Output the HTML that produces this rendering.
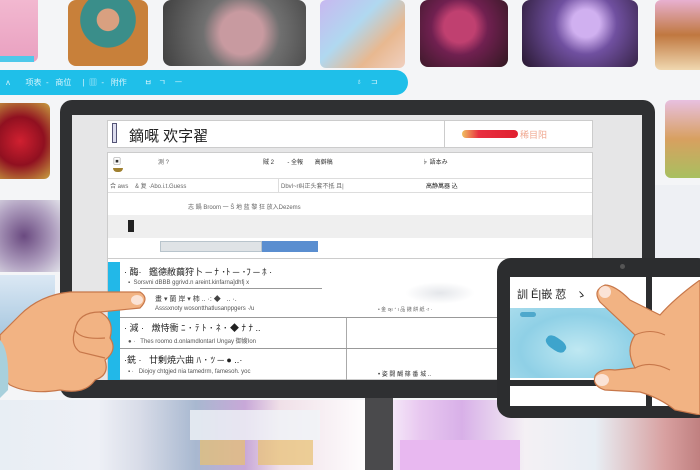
<!DOCTYPE html>
<html><head><meta charset="utf-8"><style>
*{margin:0;padding:0;box-sizing:border-box}
body{width:700px;height:470px;overflow:hidden;background:#f4f5f7;position:relative;font-family:"Liberation Sans","Noto Sans CJK SC",sans-serif}
.a{position:absolute}
.t{position:absolute;font-size:8px;color:#666;white-space:nowrap}
</style></head><body>
<!-- top thumbnails -->
<div class="a" style="left:0;top:0;width:38px;height:62px;background:linear-gradient(#f2b8d0,#e9a0c0);border-radius:0 0 6px 0"></div>
<div class="a" style="left:0;top:56px;width:34px;height:6px;background:#4ec8ea"></div>
<div class="a" style="left:68px;top:0;width:80px;height:66px;border-radius:8px;background:radial-gradient(circle at 50% 30%,#d9a080 0 18%,#3a8e8a 19% 45%,#c8803a 46%)"></div>
<div class="a" style="left:163px;top:0;width:143px;height:66px;border-radius:8px;background:radial-gradient(circle at 55% 50%,#c89aa0 0 25%,#707070 45%,#404040)"></div>
<div class="a" style="left:320px;top:0;width:85px;height:68px;border-radius:6px;background:linear-gradient(135deg,#c8b8f0,#b0d8f0 40%,#e8b890 70%,#f0d0c0)"></div>
<div class="a" style="left:420px;top:0;width:88px;height:67px;border-radius:8px;background:radial-gradient(circle at 45% 40%,#c04070 0 25%,#702050 45%,#301820)"></div>
<div class="a" style="left:522px;top:0;width:116px;height:67px;border-radius:8px;background:radial-gradient(circle at 55% 35%,#d0b0f0 0 18%,#7050a0 40%,#281830)"></div>
<div class="a" style="left:655px;top:0;width:45px;height:70px;border-radius:6px 0 0 6px;background:linear-gradient(#e8b0d0,#c07840,#f0d8b0)"></div>
<!-- cyan bar -->
<div class="a" style="left:0;top:70px;width:408px;height:25px;background:#1fbfe9;border-radius:0 13px 13px 0"></div>
<div class="t" style="left:6px;top:77px;color:#d8f4fc">ᴧ&nbsp;&nbsp;&nbsp;&nbsp;&nbsp;&nbsp;&nbsp;项表&nbsp;&nbsp;-&nbsp;&nbsp;&nbsp;商位&nbsp;&nbsp;&nbsp;&nbsp;&nbsp;|&nbsp;&nbsp;▥&nbsp;&nbsp;-&nbsp;&nbsp;&nbsp;附作&nbsp;&nbsp;&nbsp;&nbsp;&nbsp;&nbsp;&nbsp;&nbsp;ㅂ&nbsp;&nbsp;&nbsp;ㄱ&nbsp;&nbsp;&nbsp;&nbsp;ㅡ</div>
<div class="t" style="left:356px;top:77px;color:#d8f4fc">♁&nbsp;&nbsp;&nbsp;&nbsp;⊐</div>
<!-- side tiles -->
<div class="a" style="left:0;top:103px;width:50px;height:76px;border-radius:0 6px 6px 0;background:radial-gradient(circle at 40% 50%,#d02030,#901020 50%,#c8a040)"></div>
<div class="a" style="left:0;top:200px;width:60px;height:72px;background:radial-gradient(circle at 40% 50%,#6a4a80,#b0a0c0 60%,#e0e0e8)"></div>
<div class="a" style="left:0;top:275px;width:55px;height:60px;background:linear-gradient(#dbe8f4,#a8c8e0)"></div>
<div class="a" style="left:665px;top:100px;width:35px;height:78px;border-radius:6px 0 0 6px;background:linear-gradient(#e8c0e0,#d8a060,#a8c060)"></div>
<div class="a" style="left:655px;top:185px;width:45px;height:75px;background:#eef0f4"></div>
<!-- bottom blur -->
<div class="a" style="left:0;top:400px;width:700px;height:70px;background:linear-gradient(90deg,#e8eef4 0,#eef0f6 14%,#d8dce8 20%,#a8b8d0 28%,#c8a8d8 35%,#f0e0e8 40%,#ffffff 53%,#e8c8f0 60%,#d8b0e8 66%,#f4f0f4 75%,#e8eef4 85%,#d8a0a0 95%,#c08080)"></div>
<div class="a" style="left:190px;top:410px;width:130px;height:30px;background:#f0f4f8;opacity:.8"></div>
<div class="a" style="left:200px;top:440px;width:45px;height:25px;background:#e8c070;opacity:.7"></div>
<div class="a" style="left:258px;top:440px;width:55px;height:25px;background:#e8c070;opacity:.7"></div>
<div class="a" style="left:400px;top:440px;width:120px;height:30px;background:#e8b8f0"></div>
<!-- stand -->
<div class="a" style="left:365px;top:395px;width:28px;height:75px;background:#4a4a4c"></div>
<!-- monitor -->
<div class="a" style="left:60px;top:100px;width:595px;height:298px;background:#2f3032;border-radius:12px"></div>
<div class="a" style="left:72px;top:115px;width:570px;height:265px;background:#e6e6e7"></div>
<!-- header -->
<div class="a" style="left:107px;top:120px;width:486px;height:28px;background:#fff;border:1px solid #ccc"></div>
<div class="a" style="left:112px;top:123px;width:5px;height:20px;border:1px solid #557;background:#dde"></div>
<div class="t" style="left:129px;top:125px;font-size:15px;color:#222">鏑嘅 欢字翟</div>
<div class="a" style="left:444px;top:121px;width:1px;height:26px;background:#ccc"></div>
<div class="a" style="left:462px;top:130px;width:56px;height:8px;border-radius:4px;background:linear-gradient(90deg,#f0c060,#e83040 30%,#e02030)"></div>
<div class="t" style="left:520px;top:128px;color:#f0a890;font-size:9px">稀目阳</div>
<!-- table -->
<div class="a" style="left:107px;top:152px;width:486px;height:228px;background:#fff;border:1px solid #ccc"></div>
<div class="a" style="left:108px;top:178px;width:484px;height:1px;background:#ddd"></div>
<div class="a" style="left:108px;top:192px;width:484px;height:1px;background:#ddd"></div>
<div class="a" style="left:108px;top:215px;width:484px;height:23px;background:#efefef"></div>
<div class="a" style="left:278px;top:178px;width:1px;height:14px;background:#ddd"></div>
<div class="t" style="left:113px;top:156px;color:#333">▣</div>
<div class="a" style="left:113px;top:168px;width:10px;height:4px;background:#a08030;border-radius:0 0 5px 5px"></div>
<div class="t" style="left:158px;top:157px;font-size:6px">測 ?</div>
<div class="t" style="left:263px;top:157px;font-size:6px;color:#333">賊 2&nbsp;&nbsp;&nbsp;&nbsp;&nbsp;&nbsp;&nbsp;&nbsp;- 全報&nbsp;&nbsp;&nbsp;&nbsp;&nbsp;&nbsp;&nbsp;高僻稿</div>
<div class="t" style="left:422px;top:157px;font-size:6px;color:#333">♭ 語本み</div>
<div class="t" style="left:110px;top:181px;font-size:6px">合 aws&nbsp;&nbsp;&nbsp;&nbsp;& 复 ·Abo.i.t.Guess</div>
<div class="t" style="left:281px;top:181px;font-size:6px">Dbvl~r纠正头套不抵 且|</div>
<div class="t" style="left:426px;top:181px;font-size:6px;color:#222">高静萬器 込</div>
<div class="t" style="left:188px;top:202px;font-size:6px">志 鍋 Broom&nbsp;一 Ŝ 地 蓝 黎 狂 放入Dezems</div>
<div class="a" style="left:128px;top:220px;width:6px;height:12px;background:#222"></div>
<div class="a" style="left:160px;top:241px;width:102px;height:11px;background:#dfe3e6;border:1px solid #b8c4cc"></div>
<div class="a" style="left:262px;top:241px;width:56px;height:11px;background:#5a8ed0"></div>
<div class="a" style="left:108px;top:258px;width:484px;height:1px;background:#ccc"></div>
<!-- list -->
<div class="a" style="left:108px;top:262px;width:12px;height:118px;background:#22b8e8"></div>
<div class="t" style="left:124px;top:265px;font-size:9px;color:#222">· 酶·&nbsp;&nbsp;&nbsp;鑑德敝繭狩卜 ─ ﾅ ･ﾄ ─ ･ﾌ ─ ﾎ ·</div>
<div class="t" style="left:128px;top:280px;font-size:6px;color:#555">▪&nbsp;&nbsp;Sorsvni dBBB ggrivd.n areint.kinfarna]dhfj x</div>
<div class="a" style="left:140px;top:288px;width:182px;height:1px;background:#999"></div>
<div class="t" style="left:155px;top:294px;font-size:7px;color:#444">畫 ▾ 蘭 岸 ▾ 柿 .. ·: ◆&nbsp;&nbsp;&nbsp;.. ·.</div>
<div class="t" style="left:155px;top:306px;font-size:6px;color:#555">Asssxnoty wosontthatlusanppgers ·/u</div>
<div class="a" style="left:405px;top:282px;width:70px;height:22px;border-radius:10px;background:radial-gradient(ellipse,#e4e6ea,#fff 70%)"></div>
<div class="t" style="left:378px;top:306px;font-size:5px">• 金 ıʞı ᐩ ı 品 錢 餅 紙 ·r ·</div>
<div class="a" style="left:120px;top:317px;width:472px;height:1px;background:#999"></div>
<div class="a" style="left:346px;top:318px;width:1px;height:62px;background:#aaa"></div>
<div class="t" style="left:124px;top:321px;font-size:9px;color:#222">· 減 ·&nbsp;&nbsp;&nbsp;燉恃衝 ﾆ ･ ﾃ ﾄ ･ ﾈ ･ ◆ ﾅ ﾅ ..</div>
<div class="t" style="left:128px;top:336px;font-size:6px;color:#555">● ·&nbsp;&nbsp;&nbsp;Thes roomo d.onlamdlontarl Ungay 御嫂Ion</div>
<div class="a" style="left:120px;top:348px;width:472px;height:1px;background:#999"></div>
<div class="t" style="left:124px;top:353px;font-size:9px;color:#222">·銑 ·&nbsp;&nbsp;&nbsp;廿剰焼六曲 ﾊ ･ ﾂ ─ ● ..·</div>
<div class="t" style="left:128px;top:369px;font-size:6px;color:#555">▪ ·&nbsp;&nbsp;&nbsp;Diojoy chtgjed nia tamedrm, famesoh. yoc</div>
<div class="t" style="left:378px;top:369px;font-size:6px;color:#333">• 姿 闘 醐 篠 番 城 ..</div>
<!-- left hand -->
<svg class="a" style="left:0;top:280px" width="160" height="125" viewBox="0 0 160 125">
<path d="M0 55 L20 35 Q40 15 70 12 L140 12 Q150 18 140 28 L100 32 Q115 40 110 58 Q118 70 105 80 Q110 95 95 100 Q85 115 60 110 Q30 115 10 105 L0 95 Z" fill="#f2b383" stroke="#c7774a" stroke-width="1.2"/>
<path d="M100 32 Q78 32 75 50 Q80 60 105 58 M75 50 Q70 65 80 72 L105 78" fill="none" stroke="#c7774a" stroke-width="1.2"/>
<ellipse cx="137" cy="20" rx="6" ry="5" fill="#fbe3d6"/>
<path d="M0 60 Q10 70 8 110 L0 118 Z" fill="#a8d0dc"/>
</svg>
<!-- tablet -->
<div class="a" style="left:497px;top:258px;width:215px;height:160px;background:#2c2d2f;border-radius:14px"></div>
<div class="a" style="left:620px;top:264px;width:5px;height:5px;border-radius:50%;background:#555"></div>
<div class="a" style="left:510px;top:277px;width:136px;height:103px;background:#fff"></div>
<div class="a" style="left:652px;top:277px;width:48px;height:103px;background:#fff"></div>
<div class="a" style="left:510px;top:386px;width:136px;height:20px;background:#fff"></div>
<div class="a" style="left:652px;top:386px;width:48px;height:20px;background:#fff"></div>
<div class="a" style="left:510px;top:308px;width:136px;height:70px;background:radial-gradient(ellipse at 50% 60%,#bfe8f2,#8fd0e6 60%,#a8dcec)"></div>
<div class="a" style="left:545px;top:338px;width:22px;height:12px;background:#3ea4cc;border-radius:40%;transform:rotate(35deg)"></div>
<div class="a" style="left:520px;top:312px;width:16px;height:5px;background:#4ea8cc;border-radius:3px"></div>
<div class="t" style="left:517px;top:286px;font-size:11px;color:#222">訓 Ĕ|嵌 荵&nbsp;&nbsp;&nbsp;ゝ</div>
<!-- right hand -->
<svg class="a" style="left:580px;top:280px" width="120" height="135" viewBox="0 0 120 135">
<path d="M120 0 L120 135 L95 130 Q80 118 60 112 L25 110 Q12 106 15 96 Q20 88 35 90 L55 88 Q45 70 55 55 L20 22 Q12 10 25 5 Q35 5 50 20 L80 35 Q95 18 120 0 Z" fill="#f2b383" stroke="#c7774a" stroke-width="1.2"/>
<path d="M55 55 Q70 48 85 55 M55 88 Q70 80 90 90" fill="none" stroke="#c7774a" stroke-width="1.1"/>
<ellipse cx="25" cy="12" rx="6" ry="6" fill="#fbe3d6"/>
<ellipse cx="22" cy="100" rx="7" ry="6" fill="#fbe3d6"/>
</svg>
</body></html>
